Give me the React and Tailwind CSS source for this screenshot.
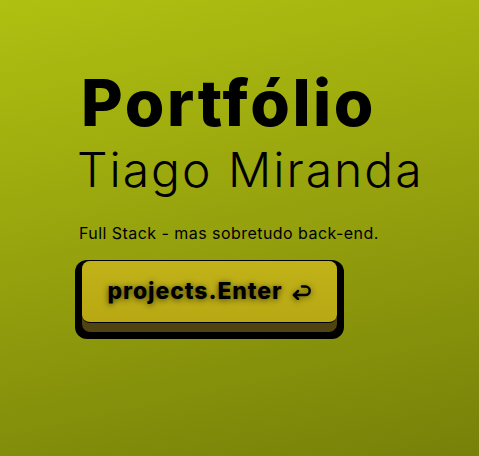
import React from 'react';

const ReturnIcon = () => (
    <svg width="21" height="16" viewBox="0 0 21 16" fill="none" stroke="currentColor" strokeWidth="2.5" strokeLinecap="round" strokeLinejoin="round">
        <path d="M3 11 H14.5 A4.2 4.2 0 0 0 14.5 2.6 H11" />
        <path d="M7 7 L3 11 L7 15" />
    </svg>
);

const App = () => {
    return (
        <div
            className="min-h-[456px] w-full bg-[linear-gradient(168deg,#b0c011_0%,#95a10d_50%,#778109_100%)] pl-[79px] pt-[71px] text-black"
            style={{ fontFamily: 'Inter, "Noto Sans", sans-serif' }}
        >
            <h1 className="ml-[2px] text-[64px] font-extrabold leading-none tracking-[2.6px]">Portfólio</h1>
            <h2 className="-ml-[2px] mt-[11px] text-[48px] font-light leading-none tracking-[2px]">Tiago Miranda</h2>
            <p className="mt-[31px] text-[16px] leading-none tracking-[0.45px]">Full Stack - mas sobretudo back-end.</p>

            <button className="-ml-[4px] mt-[19px] block rounded-[12px] bg-black px-[6px] pb-[6px]">
                <div className="rounded-[9px] border border-black bg-[#4f4311] pb-[9px]">
                    <div className="flex h-[62px] w-[255px] items-center justify-center gap-[8px] rounded-[8px] border-b border-black bg-[linear-gradient(180deg,#c1b219,#b8a914)] text-[23px] font-extrabold tracking-[0.9px] [text-shadow:0_1px_6px_rgba(0,0,0,0.65)]">
                        <span>projects.Enter</span>
                        <span className="mt-[1px] [filter:drop-shadow(0_1px_3px_rgba(0,0,0,0.6))]">
                            <ReturnIcon />
                        </span>
                    </div>
                </div>
            </button>
        </div>
    );
};

export default App;
